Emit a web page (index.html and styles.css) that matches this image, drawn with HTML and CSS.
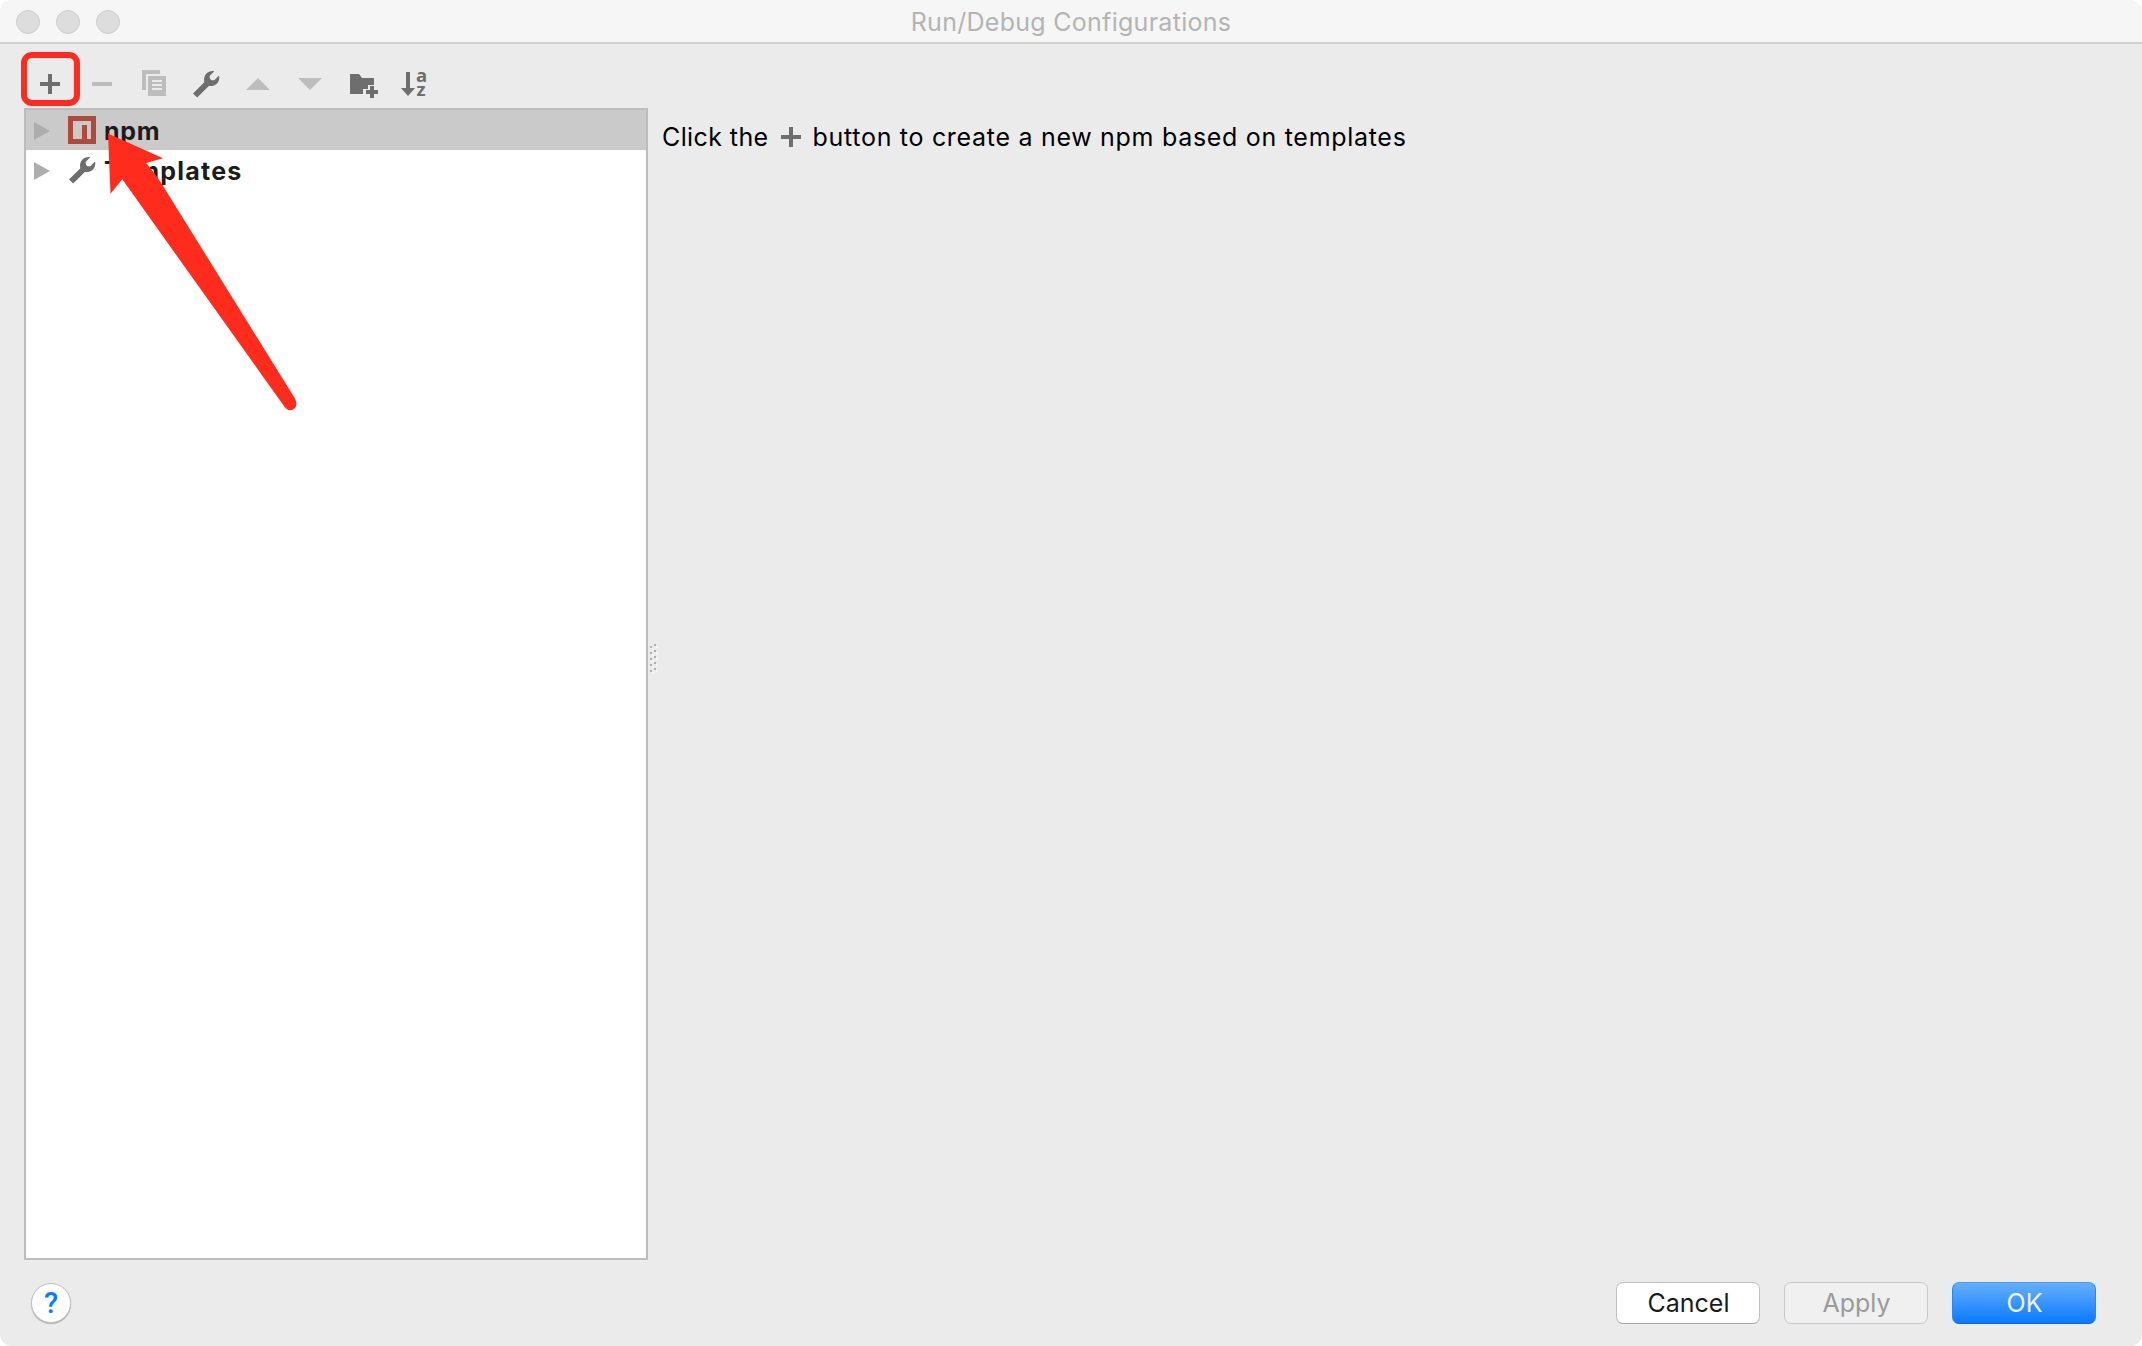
FILE: index.html
```html
<!DOCTYPE html>
<html lang="en">
<head>
    <meta charset="UTF-8">
    <meta name="viewport" content="width=device-width, initial-scale=1.0">
    <title>Run/Debug Configurations</title>
    <link rel="stylesheet" href="styles.css">
</head>
<body>

<svg class="defs">
    <symbol id="plus" viewBox="0 0 20 20"><path d="M8 0h4v8h8v4h-8v8H8v-8H0V8h8z"/></symbol>
    <symbol id="wrench" viewBox="0 0 28 28"><path d="M1 23.5 12.3 12.2C11 6.5 14.500 0.600 21.500 1L22.300 1.300 17.800 5.800C17.200 9.200 19.200 10.800 22.300 10.200L27 5.500C28.500 11.500 23.500 17 16.800 15.900L5.200 27.500z"/></symbol>
</svg>

<div class="window">
    <div class="titlebar">
        <div class="lights"><span></span><span></span><span></span></div>
        <div class="title">Run/Debug Configurations</div>
    </div>

    <div class="content">
        <div class="left">
            <div class="toolbar">
                <div class="tool add"><svg width="20" height="20"><use href="#plus"/></svg></div>
                <div class="tool off"><svg width="20" height="4"><path d="M0 0h20v4H0z"/></svg></div>
                <div class="tool off"><svg width="32" height="32"><path d="M4 2h18v4H8v16H4z"/><path fill-rule="evenodd" d="M10 8h18v20H10zM14 12v2h10v-2zM14 16v2h10v-2zM14 20v2h10v-2z"/></svg></div>
                <div class="tool"><svg width="28" height="28"><use href="#wrench"/></svg></div>
                <div class="tool off"><svg width="24" height="12"><path d="M0 12 12 0l12 12z"/></svg></div>
                <div class="tool off"><svg width="24" height="12"><path d="M0 0h24L12 12z"/></svg></div>
                <div class="tool"><svg width="32" height="32"><path d="M4 6h9l3 4h12v7h-6v4h-5v5H4z"/><path d="M24 18h4v4h4v4h-4v4h-4v-4h-4v-4h4z"/></svg></div>
                <div class="tool"><svg class="sort" width="32" height="32"><path d="M8 4h4v16h5l-7 8-7-8h5z"/><text x="18" y="14">a</text><text x="18.500" y="28">z</text></svg></div>
            </div>
            <div class="tree">
                <div class="node selected">
                    <svg class="twisty" width="16" height="18"><path d="M0 0 16 9 0 18z"/></svg>
                    <svg class="icon" width="28" height="28"><path fill="#b04a3b" d="M0 0h28v28H0z"/><path fill="#d0c4c3" d="M5 5h18v18H5z"/><path fill="#cacaca" d="M6 6h16v16H6z"/><path fill="#b04a3b" d="M14 9h5v14h-5z"/></svg>
                    <span class="name">npm</span>
                </div>
                <div class="node">
                    <svg class="twisty" width="16" height="18"><path d="M0 0 16 9 0 18z"/></svg>
                    <svg class="icon" width="28" height="28"><use href="#wrench"/></svg>
                    <span class="name wide">Templates</span>
                </div>
            </div>
        </div>
        <div class="splitter">
            <svg width="8" height="32">
                <path fill="#f5f5f5" d="M2 4h2v2H2zM2 10h2v2H2zM2 16h2v2H2zM2 22h2v2H2zM2 28h2v2H2zM6 2h2v2H6zM6 8h2v2H6zM6 14h2v2H6zM6 20h2v2H6zM6 26h2v2H6z"/>
                <path fill="#afafaf" d="M0 2h2v2H0zM0 8h2v2H0zM0 14h2v2H0zM0 20h2v2H0zM0 26h2v2H0zM4 0h2v2H4zM4 6h2v2H4zM4 12h2v2H4zM4 18h2v2H4zM4 24h2v2H4z"/>
            </svg>
        </div>
        <div class="hint">
            <span class="hint-start">Click the</span>
            <svg width="20" height="20"><use href="#plus"/></svg>
            <span class="hint-end">button to create a new npm based on templates</span>
        </div>
    </div>

    <div class="footer">
        <button class="help">?</button>
        <div class="buttons">
            <button class="btn">Cancel</button>
            <button class="btn disabled">Apply</button>
            <button class="btn primary">OK</button>
        </div>
    </div>

    <!-- red marks over the add button -->
    <div class="mark-box"></div>
    <svg class="mark-arrow" width="200" height="290"><path d="M3 3.500 58 28.300 41 33Q54 48 63 64L190 268.500Q194 277 187 280Q183 281 180 277.500L17.300 49.300 5.500 63.700z"/></svg>
</div>

</body>
</html>
```

FILE: styles.css
```css
body {
    margin: 0;
    background: #fff;
    font-family: Inter, "Liberation Sans", sans-serif;
    font-size: 25px;
    color: #000;
}
svg {
    display: block;
    fill: #6e6e6e;
}
.defs {
    display: none;
}
.window {
    position: relative;
    display: flex;
    flex-direction: column;
    box-sizing: border-box;
    width: 2142px;
    height: 1346px;
    background: #ebebeb;
    border-radius: 12px;
    overflow: hidden;
}
.titlebar {
    display: grid;
    grid-template-columns: 1fr auto 1fr;
    align-items: center;
    box-sizing: border-box;
    height: 44px;
    background: #f6f6f6;
    border-bottom: 2px solid #d1d1d1;
}
.lights {
    display: flex;
    gap: 16px;
    padding: 2px 0 0 16px;
}
.lights span {
    box-sizing: border-box;
    width: 24px;
    height: 24px;
    border: 1px solid #cecece;
    border-radius: 50%;
    background: #dddddd;
}
.title {
    padding-top: 3px;
    color: #b4b4b4;
    letter-spacing: 0.28px;
    line-height: 39px;
}
.content {
    display: flex;
    height: 1216px;
    padding-left: 24px;
}
.left {
    width: 624px;
}
.toolbar {
    display: flex;
    align-items: center;
    gap: 20px;
    height: 32px;
    padding: 24px 0 8px 10px;
}
.tool {
    display: flex;
    align-items: center;
    justify-content: center;
    width: 32px;
    height: 32px;
}
.off svg {
    fill: #bdbdbd;
}
.sort {
    overflow: visible;
}
.sort text {
    font-family: "Open Sans", sans-serif;
    font-weight: 700;
    font-size: 18.5px;
}
.tree {
    box-sizing: border-box;
    height: 1152px;
    border: 2px solid #bdbdbd;
    background: #fff;
}
.node {
    display: flex;
    align-items: center;
    height: 40px;
    padding-left: 8px;
    color: #1c1c1c;
    font-weight: 700;
}
.selected {
    background: #cacaca;
}
.twisty {
    margin-top: 2px;
    fill: #adadad;
}
.icon {
    margin: 0 8px 0 18px;
}
.name {
    padding-top: 1px;
    letter-spacing: 0.7px;
}
.wide {
    letter-spacing: 1.25px;
}
.splitter {
    display: flex;
    align-items: center;
    width: 12px;
    padding: 16px 0 0 2px;
}
.hint {
    display: flex;
    align-items: center;
    height: 30px;
    padding-top: 78px;
}
.hint svg {
    margin: 0 12px;
}
.hint-start {
    letter-spacing: 0.4px;
}
.hint-end {
    letter-spacing: 0.7px;
}
.footer {
    display: flex;
    justify-content: space-between;
    align-items: flex-start;
    padding: 22px 46px 0 31px;
}
.buttons {
    display: flex;
    gap: 24px;
}
.btn {
    box-sizing: border-box;
    width: 144px;
    height: 42px;
    padding: 0 0 0 1px;
    border: 1px solid #c3c3c3;
    border-bottom-color: #a8a8a8;
    border-radius: 7px;
    background: #fff;
    color: #1a1a1a;
    font: inherit;
}
.disabled {
    border-color: #c8c8c8;
    background: #f0f0f0;
    color: #9a9a9a;
}
.primary {
    border-color: #4a9bf5 #2487fc #0a66f8;
    background: linear-gradient(#65b0fc, #0a7aff);
    color: #f3f3fb;
}
.help {
    box-sizing: border-box;
    width: 40px;
    height: 40px;
    margin-top: 1px;
    padding: 0;
    border: 1px solid #c2c2c2;
    border-radius: 50%;
    background: #fff;
    box-shadow: 0 1px 1px #b0b0b0;
    color: #0a7cff;
    font: 500 29px Roboto, sans-serif;
}
.mark-box {
    position: absolute;
    left: 21px;
    top: 52px;
    box-sizing: border-box;
    width: 59px;
    height: 54px;
    border: 6px solid #ff2b1c;
    border-radius: 11px;
}
.mark-arrow {
    position: absolute;
    left: 105px;
    top: 130px;
    fill: #ff2b1c;
}
```
